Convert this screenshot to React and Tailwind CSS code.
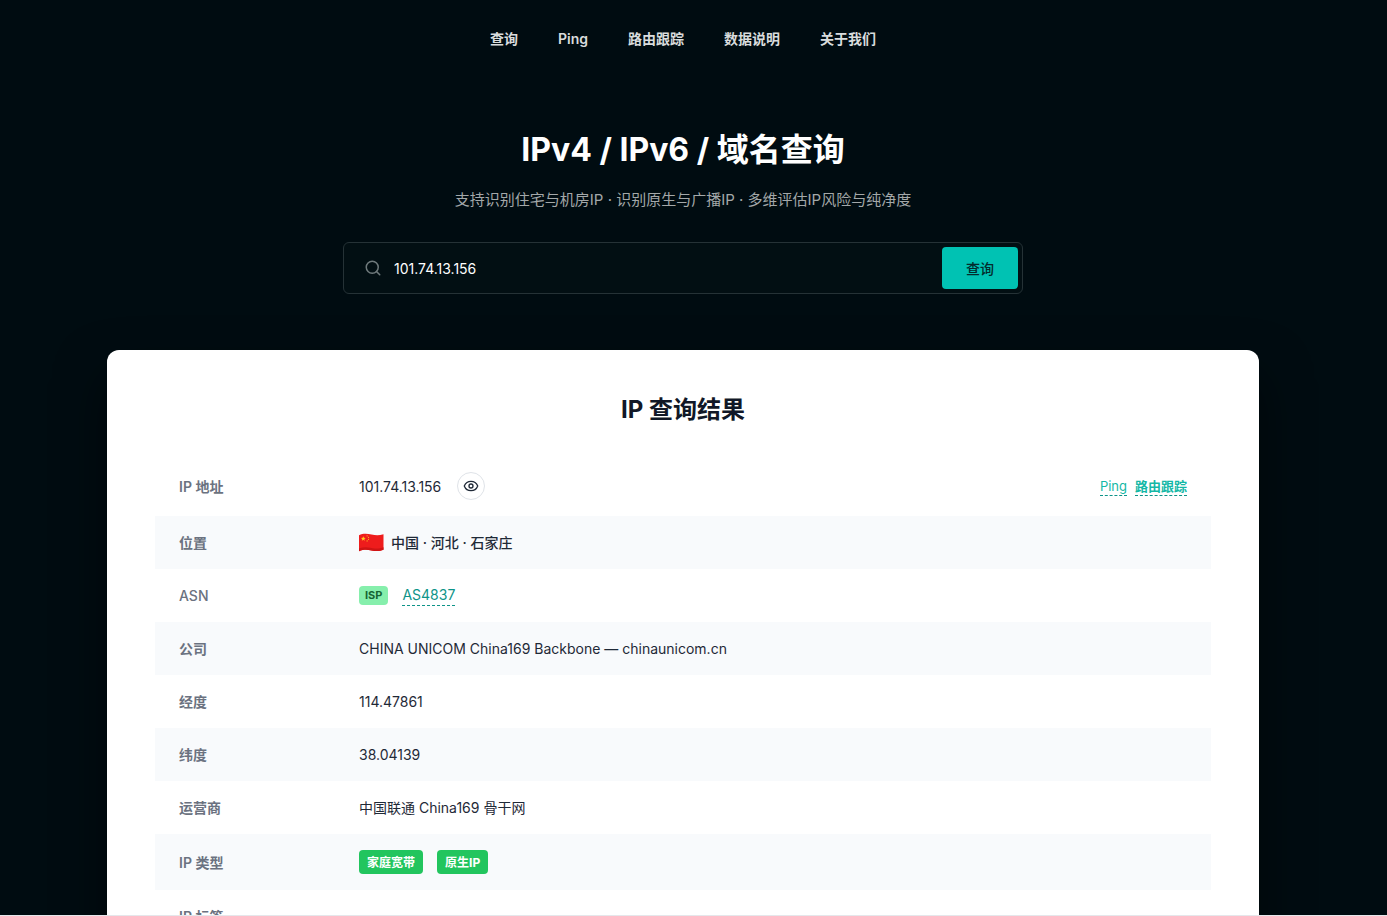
import React, { useState } from 'react';
import { Eye, EyeOff, Search } from 'lucide-react';

const navItems = ['查询', 'Ping', '路由跟踪', '数据说明', '关于我们'];

function ChinaFlag() {
    return (
        <svg width="26" height="20" viewBox="0 0 26 20" role="img" aria-label="中国">
            <path d="M0 2.2C4 .4 8 .6 12.500 1.600c4.500 1 8 1 12-.4v15.600c-4 1.700-7.500 1.500-12 .6-4.500-1-8.500-1-12.500.8z" fill="#ee1c1c" />
            <path d="M0 15.500c4-1.600 8-1.600 12.500-.6 4.500.9 8 1 12-.6v2.500c-4 1.700-7.500 1.500-12 .6-4.500-1-8.500-1-12.500.8z" fill="#cf1414" />
            <path d="M4.300 3.200l.6 1.600 1.800.1-1.400 1.100.5 1.700-1.500-1-1.500 1 .5-1.700-1.400-1.100 1.800-.1z" fill="#ffd21f" />
            <g fill="#ffb81f">
                <circle cx="8.100" cy="2.800" r=".6" />
                <circle cx="9.500" cy="4.300" r=".6" />
                <circle cx="9.500" cy="6.300" r=".6" />
                <circle cx="8.100" cy="7.900" r=".6" />
            </g>
        </svg>
    );
}

function DashedLink({ children, className }) {
    return (
        <a href="#" className={`border-b border-dashed border-[#0d9488] ${className}`}>
            {children}
        </a>
    );
}

function Tag({ children }) {
    return (
        <span className="inline-flex h-6 items-center rounded bg-[#22c55e] px-2 text-[12px] font-bold text-white">
            {children}
        </span>
    );
}

function Row({ label, children }) {
    return (
        <tr className="even:bg-[#f8fafc]">
            <th scope="row" className="w-[204px] py-4 pl-6 text-left font-semibold text-[#6b7280]">
                {label}
            </th>
            <td className="py-4 pr-6 text-[#1f2937]">
                <div className="flex items-center">{children}</div>
            </td>
        </tr>
    );
}

function SearchBar({ value, onChange }) {
    return (
        <form
            onSubmit={(e) => e.preventDefault()}
            className="mx-auto mt-[30px] flex w-full max-w-[680px] items-center rounded-md border border-[#253236] bg-[#020f13] p-1"
        >
            <label htmlFor="query" className="ml-4 shrink-0 text-[#6f7a7c]">
                <Search className="size-[18px]" aria-label="IP 或域名" />
            </label>
            <input
                id="query"
                type="text"
                value={value}
                onChange={(e) => onChange(e.target.value)}
                className="ml-3 h-[42px] min-w-0 flex-1 bg-transparent text-[14px] text-white outline-none"
            />
            <button type="submit" className="h-[42px] rounded bg-[#00c2b3] px-6 text-[14px] font-medium text-[#032b2c]">
                查询
            </button>
        </form>
    );
}

export default function App() {
    const [query, setQuery] = useState('101.74.13.156');
    const [visible, setVisible] = useState(true);

    return (
        <div className="h-screen overflow-y-auto border-b border-[#e5e7eb] bg-[#000c11] pr-[21px] font-['Inter','Noto_Sans_CJK_SC',sans-serif] [scrollbar-width:none]">
            <nav className="flex flex-wrap justify-center gap-10 px-4 pt-7 text-[14px] leading-[22px] font-semibold text-[#d9dcdd]">
                {navItems.map((item) => (
                    <a key={item} href="#">{item}</a>
                ))}
            </nav>

            <header className="px-4 pt-[76px] text-center">
                <h1 className="text-[32px] leading-[48px] font-bold text-white">IPv4 / IPv6 / 域名查询</h1>
                <p className="mt-3.5 text-[15px] leading-6 text-[#a3a8a9]">
                    支持识别住宅与机房IP · 识别原生与广播IP · 多维评估IP风险与纯净度
                </p>
                <SearchBar value={query} onChange={setQuery} />
            </header>

            <main className="mx-auto mt-14 max-w-6xl rounded-xl bg-white px-12 pt-[42px] pb-12 shadow-[0_25px_50px_rgba(0,0,0,0.5)]">
                <h2 className="text-center text-[24px] leading-9 font-bold text-[#111827]">IP 查询结果</h2>
                <table className="mt-7 w-full text-[14px] leading-[21px]">
                    <tbody>
                        <Row label="IP 地址">
                            <span>{visible ? '101.74.13.156' : '***.***.***.***'}</span>
                            <button
                                type="button"
                                aria-label="显示或隐藏 IP"
                                onClick={() => setVisible(!visible)}
                                className="ml-4 flex size-7 items-center justify-center rounded-full border border-[#dfe3e8] bg-white text-[#1f2937]"
                            >
                                {visible ? <Eye className="size-4" /> : <EyeOff className="size-4" />}
                            </button>
                            <span className="ml-auto flex gap-2 text-[13px] leading-[18px] text-[#14b8a6]">
                                <DashedLink>Ping</DashedLink>
                                <DashedLink className="font-semibold">路由跟踪</DashedLink>
                            </span>
                        </Row>
                        <Row label="位置">
                            <ChinaFlag />
                            <span className="ml-1.5 font-medium">中国 · 河北 · 石家庄</span>
                        </Row>
                        <Row label={<span className="font-medium">ASN</span>}>
                            <span className="mr-3.5 rounded bg-[#86efac] px-1.5 text-[11px] leading-[19px] font-bold text-[#166534]">ISP</span>
                            <DashedLink className="leading-5 text-[#0d9488]">AS4837</DashedLink>
                        </Row>
                        <Row label="公司">CHINA UNICOM China169 Backbone — chinaunicom.cn</Row>
                        <Row label="经度">114.47861</Row>
                        <Row label="纬度">38.04139</Row>
                        <Row label="运营商">中国联通 China169 骨干网</Row>
                        <Row label="IP 类型">
                            <span className="flex gap-3.5">
                                <Tag>家庭宽带</Tag>
                                <Tag>原生IP</Tag>
                            </span>
                        </Row>
                        <Row label="IP 标签" />
                    </tbody>
                </table>
            </main>
        </div>
    );
}
